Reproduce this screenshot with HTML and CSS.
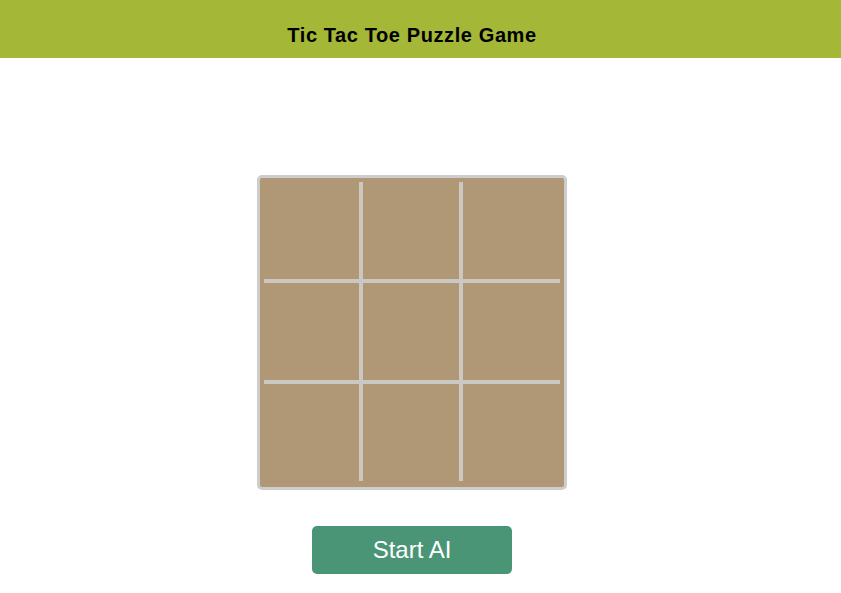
FILE: index.html
```html
<!DOCTYPE html>
<html>
<head>
<meta charset="utf-8">
<link rel="stylesheet" href="styles.css">
</head>
<body>
<header class="topbar"><h1 class="title">Tic Tac Toe Puzzle Game</h1></header>
<main class="main">
  <div class="board">
    <div class="grid">
      <div class="cell"></div><div class="cell"></div><div class="cell"></div>
      <div class="cell"></div><div class="cell"></div><div class="cell"></div>
      <div class="cell"></div><div class="cell"></div><div class="cell"></div>
    </div>
  </div>
  <button class="start">Start AI</button>
</main>
</body>
</html>
```
FILE: styles.css
```css
html, body { margin: 0; padding: 0; background: #fff; }
body { font-family: "Liberation Sans", Arial, sans-serif; }
.topbar {
  height: 58px;
  background: #a4b736;
  display: flex;
  align-items: center;
  justify-content: center;
  padding-right: 17px;
}
.title { margin: 0; font-size: 20px; font-weight: bold; color: #000; padding-top: 13px; letter-spacing: 0.6px; }
.main {
  display: flex;
  flex-direction: column;
  align-items: center;
  padding-top: 117px;
  padding-right: 17px;
}
.board {
  background: #b09776;
  border: 3px solid #cdcdcd;
  border-radius: 5px;
  padding: 4px 4px 6px 4px;
}
.grid {
  display: grid;
  grid-template-columns: 95px 96px 97px;
  grid-template-rows: 97px 97px 97px;
  gap: 4px;
  background: #cbc8c3;
}
.cell { background: #b09776; }
.start {
  margin-top: 36px;
  width: 200px;
  height: 48px;
  border: none;
  border-radius: 5px;
  background: #4b9577;
  color: #fff;
  font-family: "Liberation Sans", Arial, sans-serif;
  font-size: 24px;
  padding: 0;
}
```
